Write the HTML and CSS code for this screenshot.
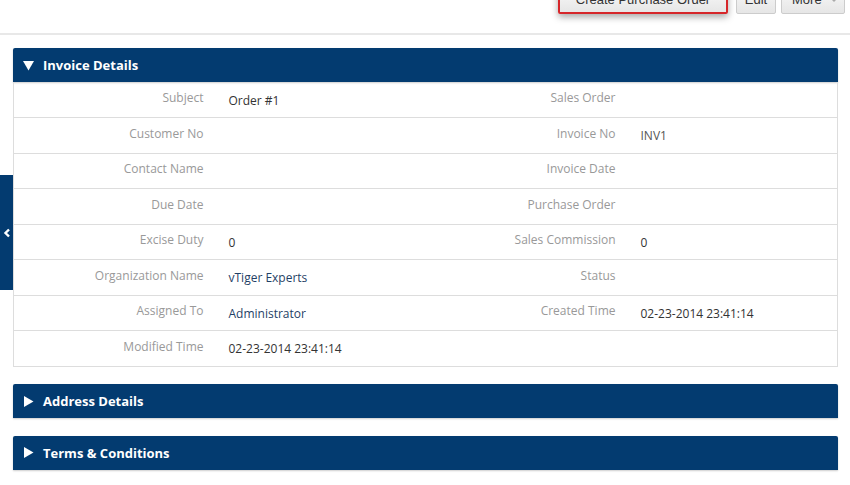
FILE: index.html
```html
<!DOCTYPE html>
<html lang="en">
<head>
  <meta charset="UTF-8">
  <title>Order #1</title>
  <link rel="stylesheet" href="styles.css">
</head>
<body>
  <div class="page-head">
    <div class="head-row">
      <h1 class="record-title">Order #1</h1>
      <div class="actions">
        <button class="btn btn-focus">Create Purchase Order</button>
        <button class="btn btn-edit">Edit</button>
        <button class="btn btn-more">More <span class="caret"></span></button>
      </div>
    </div>
  </div>

  <!-- side toggle tab -->
  <div class="side-tab">
    <svg width="8" height="10" viewBox="0 0 8 10"><polyline points="6,1.5 2.5,5 6,8.5" fill="none" stroke="#fff" stroke-width="2.4"/></svg>
  </div>

  <div class="content">
    <div class="block">
      <div class="block-header">
        <svg class="arrow" width="11" height="11" viewBox="0 0 11 11"><polygon points="0,1 11,1 5.5,10.5" fill="#fff"/></svg>
        Invoice Details
      </div>
      <table class="detail-table">
        <tr>
          <td class="lbl">Subject</td><td class="val">Order #1</td>
          <td class="lbl">Sales Order</td><td class="val"></td>
        </tr>
        <tr>
          <td class="lbl">Customer No</td><td class="val"></td>
          <td class="lbl">Invoice No</td><td class="val muted">INV1</td>
        </tr>
        <tr>
          <td class="lbl">Contact Name</td><td class="val"></td>
          <td class="lbl">Invoice Date</td><td class="val"></td>
        </tr>
        <tr>
          <td class="lbl">Due Date</td><td class="val"></td>
          <td class="lbl">Purchase Order</td><td class="val"></td>
        </tr>
        <tr>
          <td class="lbl">Excise Duty</td><td class="val">0</td>
          <td class="lbl">Sales Commission</td><td class="val">0</td>
        </tr>
        <tr>
          <td class="lbl">Organization Name</td><td class="val link">vTiger Experts</td>
          <td class="lbl">Status</td><td class="val"></td>
        </tr>
        <tr>
          <td class="lbl">Assigned To</td><td class="val link">Administrator</td>
          <td class="lbl">Created Time</td><td class="val">02-23-2014 23:41:14</td>
        </tr>
        <tr>
          <td class="lbl">Modified Time</td><td class="val">02-23-2014 23:41:14</td>
          <td class="lbl"></td><td class="val"></td>
        </tr>
      </table>
    </div>

    <div class="block">
      <div class="block-header">
        <svg class="arrow" width="11" height="11" viewBox="0 0 11 11"><polygon points="1,0 10.5,5.5 1,11" fill="#fff"/></svg>
        Address Details
      </div>
    </div>

    <div class="block">
      <div class="block-header">
        <svg class="arrow" width="11" height="11" viewBox="0 0 11 11"><polygon points="1,0 10.5,5.5 1,11" fill="#fff"/></svg>
        Terms &amp; Conditions
      </div>
    </div>
  </div>
</body>
</html>
```

FILE: styles.css
```css
* {
  margin: 0;
  padding: 0;
  box-sizing: border-box;
}

body {
  font-family: 'Open Sans', sans-serif;
  background: #fff;
  color: #333;
  position: relative;
  overflow: hidden;
}

/* cabeçalho da página */
.page-head {
  height: 35px;
  display: flex;
  flex-direction: column;
  border-bottom: 2px solid #e8e8e8;
}

.head-row {
  display: flex;
  justify-content: space-between;
  align-items: flex-start;
  margin-top: -15px;
  padding-right: 5px;
}

.record-title {
  font-weight: 300;
  font-size: 20px;
  line-height: 24px;
  color: #333;
  padding-left: 9px;
  margin-top: -4px;
}

.actions {
  display: flex;
}

.btn {
  font-family: 'Liberation Sans', Arial, sans-serif;
  font-size: 13px;
  color: #333;
  height: 29px;
  padding: 0 10px;
  white-space: nowrap;
  background: linear-gradient(#fafafa, #e6e6e6);
  border: 1px solid #ccc;
  border-radius: 2px;
}

.btn-focus {
  width: 170px;
  margin-right: 8px;
  border: 2px solid #d6262a;
  box-shadow: 0 3px 7px rgba(0, 0, 0, 0.35);
}

.btn-edit {
  width: 40px;
  padding: 0;
  margin-right: 5px;
}

.btn-more {
  width: 64px;
  text-align: left;
}

.caret {
  display: inline-block;
  margin-left: 6px;
  border-left: 3px solid transparent;
  border-right: 3px solid transparent;
  border-top: 3px solid #aaa;
  vertical-align: middle;
}

/* aba lateral */
.side-tab {
  position: absolute;
  left: 0;
  top: 175px;
  width: 13px;
  height: 115px;
  background: #033b70;
  display: flex;
  align-items: center;
  justify-content: center;
}

.content {
  padding: 13px 12px 0 13px;
}

.block {
  margin-bottom: 17.5px;
}

.block-header {
  height: 34px;
  background: #033b70;
  color: #fff;
  font-weight: bold;
  font-size: 13px;
  display: flex;
  align-items: center;
  padding-left: 10px;
  border-radius: 2px 2px 0 0;
  box-shadow: 0 1px 2px rgba(0, 0, 0, 0.2);
}

.block-header .arrow {
  margin-right: 9px;
}

.detail-table {
  width: 100%;
  border-collapse: collapse;
  border: 1px solid #ddd;
  border-top: 0;
  table-layout: fixed;
}

.detail-table td {
  height: 35.5px;
  border-top: 1px solid #ddd;
  font-size: 12px;
}

.detail-table tr:first-child td {
  border-top: 0;
}

.lbl {
  width: 25%;
  text-align: right;
  color: #999;
  padding: 0 16px 4px 0;
}

.val {
  width: 25%;
  padding: 1px 0 0 9px;
  color: #333;
}

.val.muted {
  color: #555;
}

.val.link {
  color: #1f3f66;
}
```
